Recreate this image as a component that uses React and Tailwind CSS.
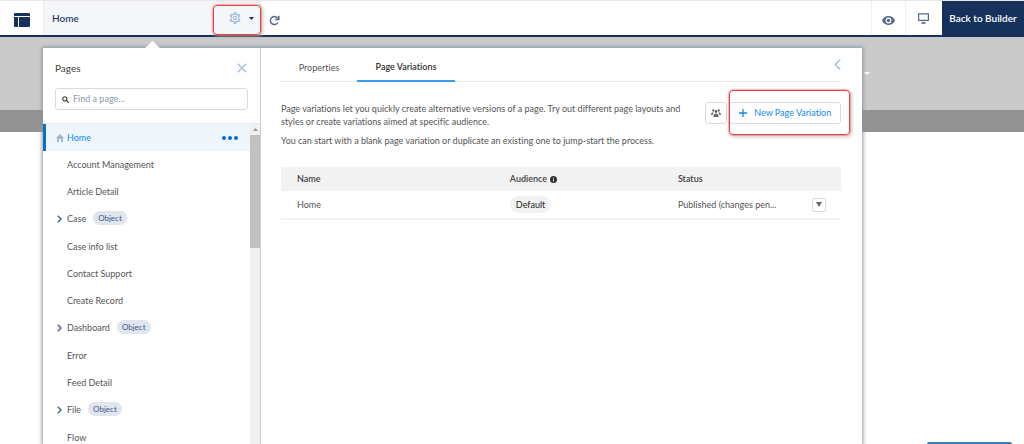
import { useState } from 'react';

const pages = [
    { name: 'Account Management' },
    { name: 'Article Detail' },
    { name: 'Case', isObject: true },
    { name: 'Case info list' },
    { name: 'Contact Support' },
    { name: 'Create Record' },
    { name: 'Dashboard', isObject: true },
    { name: 'Error' },
    { name: 'Feed Detail' },
    { name: 'File', isObject: true },
    { name: 'Flow' },
];

const LayoutIcon = () => (
    <svg className="w-4 h-[14px]" viewBox="0 0 16 14" fill="#16325c">
        <path d="M1 0h14a1 1 0 0 1 1 1v2H0V1a1 1 0 0 1 1-1z" />
        <path d="M0 4h4v10H1a1 1 0 0 1-1-1z" />
        <path d="M5 4h11v9a1 1 0 0 1-1 1H5z" />
    </svg>
);

const GearIcon = () => (
    <svg className="w-3 h-3" viewBox="0 0 24 24" fill="#a9c3dc" fillRule="evenodd">
        <path d="M9.500 0h5l.7 3.300 2.300 1.300 3.200-1 2.500 4.200-2.500 2.300v3.800l2.500 2.300-2.500 4.200-3.200-1-2.300 1.300-.7 3.300h-5l-.7-3.300-2.300-1.300-3.200 1-2.500-4.200 2.500-2.300v-3.800L.8 7.800l2.500-4.200 3.200 1 2.300-1.300zM12 5.500a6.500 6.500 0 1 0 0 13 6.500 6.500 0 0 0 0-13z" />
        <path d="M12 7.500a4.500 4.500 0 1 1 0 9 4.500 4.500 0 0 1 0-9zm0 2.700a1.800 1.800 0 1 0 0 3.600 1.800 1.800 0 0 0 0-3.600z" />
    </svg>
);

const RefreshIcon = () => (
    <svg className="w-[11px] h-[11px]" viewBox="0 0 11 11" fill="none" stroke="#54698d" strokeWidth="1.500">
        <path d="M8.900 7.500a4 4 0 1 1 0-3.800" />
        <path d="M9.800.8v3.700H6.200" />
    </svg>
);

const EyeIcon = () => (
    <svg className="w-[13px] h-[9px]" viewBox="0 0 13 9">
        <path fill="#54698d" d="M6.500 0C3.600 0 1.200 1.700 0 4.500 1.200 7.300 3.600 9 6.500 9S11.800 7.300 13 4.500C11.800 1.700 9.400 0 6.500 0z" />
        <circle cx="6.500" cy="4.500" r="2.900" fill="#fff" />
        <circle cx="6.500" cy="4.500" r="1.700" fill="#54698d" />
    </svg>
);

const DesktopIcon = () => (
    <svg className="w-[11px] h-[11px]" viewBox="0 0 11 11">
        <path fill="none" stroke="#54698d" strokeWidth="1.200" d="M.6.8h9.800v6.600H.6z" />
        <path fill="#54698d" d="M4.500 8.800h2v.7h1.300v1.200H3.200V9.500h1.300z" />
    </svg>
);

const HomeIcon = () => (
    <svg className="w-2 h-2" viewBox="0 0 8 8" fill="#a8b7c7">
        <path d="M4 0l4 4H7v3.500a.5.5 0 0 1-.5.5H5V5H3v3H1.500a.5.5 0 0 1-.5-.5V4H0z" />
    </svg>
);

const SearchIcon = () => (
    <svg className="w-[7px] h-[7px] shrink-0" viewBox="0 0 7 7" fill="none" stroke="#3e3e3c">
        <circle cx="2.800" cy="2.800" r="2.100" strokeWidth="1.100" />
        <path d="M4.400 4.400l2.300 2.300" strokeWidth="1.300" />
    </svg>
);

const CloseIcon = () => (
    <svg className="w-[10px] h-[10px]" viewBox="0 0 10 10" stroke="#a9bfd8" strokeWidth="1.400">
        <path d="M.8.8l8.400 8.400M9.200.8L.8 9.200" />
    </svg>
);

const ChevronLeftIcon = () => (
    <svg className="w-[7px] h-[11px]" viewBox="0 0 7 11" fill="none" stroke="#a9c0dc" strokeWidth="1.500">
        <path d="M6.200.6L1.200 5.500l5 4.900" />
    </svg>
);

const ChevronRightIcon = () => (
    <svg className="w-[5px] h-2" viewBox="0 0 5 8" fill="none" stroke="#4a6590" strokeWidth="1.500">
        <path d="M.8.8L4 4 .8 7.200" />
    </svg>
);

const Triangle = ({ className }) => (
    <svg className={className} viewBox="0 0 6 4" fill="currentColor" preserveAspectRatio="none">
        <path d="M0 0h6L3 4z" />
    </svg>
);

const AudienceIcon = () => (
    <svg className="w-[10px] h-2" viewBox="0 0 20 16" fill="#666">
        <circle cx="4.500" cy="3" r="2.300" />
        <circle cx="15.500" cy="3" r="2.300" />
        <path d="M0 12c0-3 1.500-5.500 4.500-5.500L5 8.500C4 9.500 3.500 10.500 3.200 12z" />
        <path d="M20 12c0-3-1.500-5.500-4.500-5.500L15 8.500c1 1 1.500 2 1.800 3.500z" />
        <circle cx="10" cy="5" r="2.800" />
        <path d="M4.800 16c0-4 1.700-7 5.200-7s5.200 3 5.200 7z" />
    </svg>
);

const InfoIcon = () => (
    <svg className="w-[7px] h-[7px]" viewBox="0 0 14 14">
        <circle cx="7" cy="7" r="7" fill="#333" />
        <path d="M7 3v2M7 6.200V11" stroke="#ddd" strokeWidth="2" />
    </svg>
);

const Header = () => (
    <header className="relative z-10 flex h-[37px] shrink-0 border-t border-t-[#e8e8e8] border-b-2 border-b-[#16325c] bg-white">
        <button className="flex w-[43px] items-center justify-center pt-1" aria-label="Layout">
            <LayoutIcon />
        </button>
        <div className="flex w-[218px] items-center justify-between border-x border-[#e6eaef] bg-[#f4f6f9] pl-2">
            <span className="text-[10px] font-semibold text-[#2b4368]">Home</span>
            <button
                className="-mr-px mt-1 flex h-[30px] w-12 items-center justify-center gap-2 rounded-sm border border-[#f03e3e] pl-2 pb-1 shadow-[0_0_0_1px_#f03e3e40,1px_1px_4px_#aaa]"
                aria-label="Page settings"
            >
                <GearIcon />
                <Triangle className="h-[3px] w-[5px] text-[#16325c]" />
            </button>
        </div>
        <button className="flex items-center px-2 pt-1" aria-label="Refresh">
            <RefreshIcon />
        </button>
        <div className="ml-auto flex">
            <button className="flex w-[34px] items-center justify-center border-l border-[#eef0f2] pt-1" aria-label="Preview">
                <EyeIcon />
            </button>
            <button className="flex w-[37px] items-center justify-center border-l border-[#eef0f2] pr-[2px]" aria-label="Desktop view">
                <DesktopIcon />
            </button>
            <button className="-mb-px w-[82px] bg-[#16325c] text-[10px] font-semibold whitespace-nowrap text-white">
                Back to Builder
            </button>
        </div>
    </header>
);

const PageRow = ({ page }) => (
    <li className={page.isObject ? 'flex h-7 items-center pl-[14px]' : 'flex h-[27px] items-center pl-[14px]'}>
        <span className="w-[10px]">{page.isObject && <ChevronRightIcon />}</span>
        <a href="#" className="text-[#555]">{page.name}</a>
        {page.isObject && (
            <span className="ml-[7px] mb-[3px] rounded-full bg-[#e0e5ee] px-[5px] text-[8px] leading-[14px] text-[#3f5b85]">
                Object
            </span>
        )}
    </li>
);

const Sidebar = () => (
    <aside className="flex w-[218px] shrink-0 flex-col border-r border-[#c6ced6] bg-white">
        <div className="flex items-center justify-between pt-3 pr-[13px] pl-3">
            <h2 className="text-[10px] leading-4 text-[#444]">Pages</h2>
            <button aria-label="Close">
                <CloseIcon />
            </button>
        </div>
        <label className="mx-3 mt-3 flex h-[22px] items-center gap-1 rounded-[3px] border border-[#dddbda] px-[6px]">
            <SearchIcon />
            <input
                type="text"
                aria-label="Find a page"
                placeholder="Find a page..."
                className="w-full text-[9px] outline-none placeholder:text-[#8e99a8]"
            />
        </label>
        <div className="mt-[13px] flex min-h-0 flex-1 border-t border-[#e4e8ec]">
            <ul className="flex-1 overflow-hidden">
                <li className="flex h-[27px] items-center border-l-[3px] border-[#0b6fc6] bg-[#eff6fb] pr-3 pl-[10px]">
                    <HomeIcon />
                    <a href="#" className="ml-[3px] text-[#1589ee]">Home</a>
                    <button className="ml-auto flex gap-[2px]" aria-label="Page options">
                        <span className="size-1 rounded-full bg-[#0070d2]" />
                        <span className="size-1 rounded-full bg-[#0070d2]" />
                        <span className="size-1 rounded-full bg-[#0070d2]" />
                    </button>
                </li>
                {pages.map((page) => (
                    <PageRow key={page.name} page={page} />
                ))}
            </ul>
            <div className="flex w-[10px] flex-col items-center bg-[#f0f0f0]">
                <Triangle className="my-1 h-[3px] w-[5px] rotate-180 text-[#999]" />
                <div className="h-[113px] w-full bg-[#c1c1c1]" />
            </div>
        </div>
    </aside>
);

const VariationsTable = () => (
    <table className="mt-5 w-full table-fixed text-left">
        <thead>
            <tr className="h-6 bg-[#f2f2f2] text-[#444]">
                <th className="w-[38%] pl-4 font-semibold">Name</th>
                <th className="w-[30%] pl-4 font-semibold">
                    <span className="flex items-center gap-[3px]">
                        Audience <InfoIcon />
                    </span>
                </th>
                <th className="pl-4 font-semibold">Status</th>
                <th className="w-[46px]" aria-label="Actions" />
            </tr>
        </thead>
        <tbody>
            <tr className="h-7 border-b-2 border-[#f3f3f3] text-[#555]">
                <td className="pl-4">Home</td>
                <td className="pl-4">
                    <span className="inline-block rounded-full bg-[#f2f2f2] px-[6px] leading-[17px] text-[#222]">Default</span>
                </td>
                <td className="pl-4 whitespace-nowrap">Published (changes pen...</td>
                <td className="pr-[15px]">
                    <button
                        className="ml-auto flex size-[14px] items-center justify-center rounded-[2px] border border-[#dddbda]"
                        aria-label="Row actions"
                    >
                        <Triangle className="h-[5px] w-[6px] text-[#666]" />
                    </button>
                </td>
            </tr>
        </tbody>
    </table>
);

const Variations = ({ onCollapse }) => (
    <section className="min-w-0 flex-1 bg-white pr-[21px] pl-5">
        <div className="flex h-[34px] items-stretch border-b border-[#e8e8e8]">
            <button className="w-[76px] pt-[6px] text-[#555]">Properties</button>
            <button className="-mb-px w-[98px] border-b-2 border-[#3a9bf4] pt-[6px] font-semibold text-[#333]">
                Page Variations
            </button>
            <button className="ml-auto self-center" aria-label="Collapse" onClick={onCollapse}>
                <ChevronLeftIcon />
            </button>
        </div>
        <div className="mt-5 flex items-start justify-between">
            <div className="w-[400px] space-y-[6px] leading-[13px] text-[#555]">
                <p>
                    Page variations let you quickly create alternative versions of a page. Try out different page layouts and
                    styles or create variations aimed at specific audience.
                </p>
                <p>You can start with a blank page variation or duplicate an existing one to jump-start the process.</p>
            </div>
            <div className="relative flex">
                <button
                    className="flex size-[22px] items-center justify-center rounded-[3px] border border-[#dddbda]"
                    aria-label="Manage audiences"
                >
                    <AudienceIcon />
                </button>
                <button className="ml-[2px] flex h-[22px] w-[112px] items-center justify-center gap-[7px] rounded-[3px] border border-[#dddbda] whitespace-nowrap text-[#1589ee]">
                    <svg className="size-2" viewBox="0 0 8 8" stroke="#1589ee" strokeWidth="1.300">
                        <path d="M4 0v8M0 4h8" />
                    </svg>
                    New Page Variation
                </button>
                <div className="pointer-events-none absolute -top-3 -right-[9px] h-[45px] w-[121px] rounded-sm border border-[#f03e3e] shadow-[0_0_0_1px_#f03e3e40,1px_1px_4px_#aaa]" />
            </div>
        </div>
        <VariationsTable />
    </section>
);

const App = () => {
    const [isOpen, setIsOpen] = useState(true);

    return (
        <div className="flex h-screen flex-col overflow-hidden bg-white font-['Lato','Noto_Sans',sans-serif] text-[9px] [font-variant-ligatures:none]">
            <Header />
            <main className="relative flex-1">
                <div className="flex h-[73px] items-center justify-end bg-[#cacaca]">
                    <Triangle className="mr-[154px] h-[3px] w-[6px] text-white" />
                </div>
                <div className="h-[22px] bg-[#929292]" />
                {isOpen && (
                    <div className="absolute top-[11px] bottom-0 left-[43px] flex w-4/5 shadow-[0_0_4px_1px_#8795a3]">
                        <div className="absolute -top-[5px] left-[104px] size-[11px] rotate-45 bg-white" />
                        <Sidebar />
                        <Variations onCollapse={() => setIsOpen(false)} />
                    </div>
                )}
                <div className="absolute right-3 bottom-0 h-[2px] w-[85px] rounded-t-sm bg-[#3d80ad]" />
            </main>
        </div>
    );
};

export default App;
